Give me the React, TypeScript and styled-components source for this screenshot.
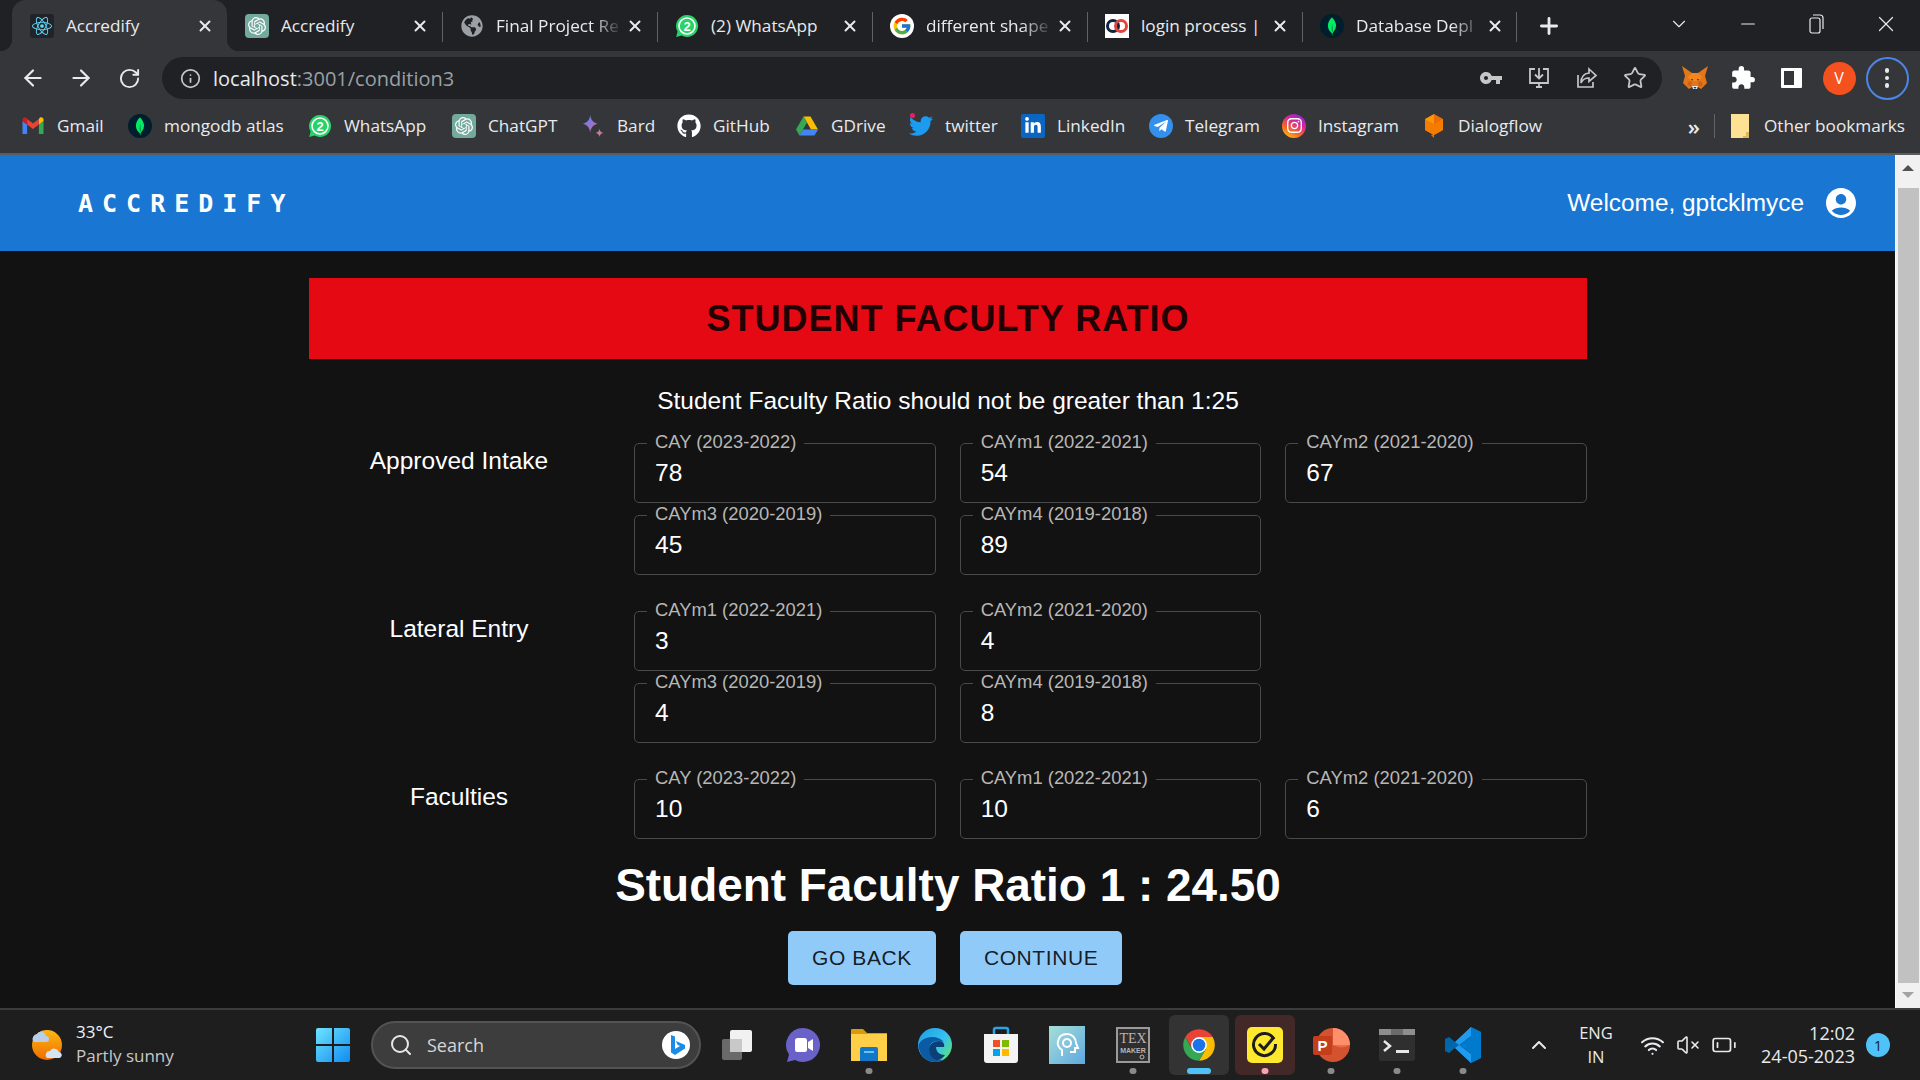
import React from 'react';

import styled, { createGlobalStyle } from 'styled-components';

import { ArrowLeft, ArrowRight, BatteryLow, ChevronDown, ChevronUp, Info, Minus, Plus, RotateCw, Search, Star, VolumeX, Wifi, X } from 'lucide-react';
import { FaGithub, FaGlobeAmericas, FaInstagram, FaLinkedinIn, FaTelegramPlane, FaTwitter } from 'react-icons/fa';
import { FcGoogle } from 'react-icons/fc';
import { MdExtension, MdVpnKey } from 'react-icons/md';
import { SiMongodb, SiOpenai, SiReact } from 'react-icons/si';

const UI_FONT = `'Open Sans', 'Noto Sans', sans-serif`;
const PAGE_FONT = `'Liberation Sans', Arial, sans-serif`;

/* ===== small drawn icons ===== */
const WhatsAppBadge: React.FC<{ size?: number }> = ({ size = 24 }) => (
  <svg width={size} height={size} viewBox="0 0 24 24">
    <path fill="#25d366" d="M12 1a11 11 0 0 0-9.4 16.6L1.2 23l5.5-1.4A11 11 0 1 0 12 1z" />
    <circle cx="12" cy="12" r="8" fill="none" stroke="#fff" strokeWidth="1.6" />
    <text x="12" y="16.5" textAnchor="middle" fontSize="13" fontWeight="700" fill="#fff" fontFamily="Liberation Sans">2</text>
  </svg>
);

const GmailIcon = () => (
  <svg width="24" height="24" viewBox="0 0 24 24">
    <path fill="#4285f4" d="M1.5 20h4.6V10.5L1.5 7z" />
    <path fill="#34a853" d="M17.9 20h4.6V7l-4.6 3.5z" />
    <path fill="#fbbc04" d="M17.9 5v5.5L22.500 7V5.500c0-1.900-2.200-3-3.700-1.800z" />
    <path fill="#ea4335" d="M6.100 10.500V5L12 9.500 17.900 5v5.500L12 15z" />
    <path fill="#c5221f" d="M1.500 5.500V7l4.600 3.500V5L5.200 3.700C3.700 2.500 1.500 3.600 1.500 5.500z" />
  </svg>
);

const BardIcon = () => (
  <svg width="30" height="30" viewBox="0 0 26 26">
    <defs>
      <linearGradient id="bard" x1="0" y1="0" x2="1" y2="1">
        <stop offset="0" stopColor="#4f86ed" />
        <stop offset="0.6" stopColor="#9b72cb" />
        <stop offset="1" stopColor="#d96570" />
      </linearGradient>
    </defs>
    <path fill="url(#bard)" d="M10 1c.8 5.500 3 8 8 9.500-5 1.500-7.200 4-8 9.500-.8-5.500-3-8-8-9.500 5-1.500 7.200-4 8-9.500z" />
    <path fill="#c77aa5" d="M20 16c.4 2.600 1.400 3.700 4 4.500-2.600.8-3.600 1.900-4 4.500-.4-2.600-1.400-3.700-4-4.500 2.600-.8 3.600-1.900 4-4.500z" />
  </svg>
);

const DriveIcon = () => (
  <svg width="24" height="24" viewBox="0 0 24 24">
    <path fill="#fbbc04" d="M8.500 2.500h7L23 15.500h-7z" />
    <path fill="#34a853" d="M8.500 2.500 1 15.500l3.500 6L12 8.500z" />
    <path fill="#4285f4" d="M4.500 21.500h15l3.500-6H8z" />
  </svg>
);

const DialogflowIcon = () => (
  <svg width="24" height="26" viewBox="0 0 24 26">
    <path fill="#ff9800" d="M12 1 3 6v11l9 5z" />
    <path fill="#ef6c00" d="m12 1 9 5v11l-9 5v3l-3-3 3-1z" />
    <path fill="#f57c00" d="M3 6l9 5 9-5v11l-9 5-9-5z" />
  </svg>
);

const FolderIcon = () => (
  <svg width="18" height="24" viewBox="0 0 18 24">
    <path fill="#fde293" d="M0 0h18v24H0z" />
    <path fill="#d9b860" d="M15 18h3v6h-6v-2h3z" />
  </svg>
);

const FoxIcon = () => (
  <svg width="28" height="26" viewBox="0 0 28 26">
    <path fill="#e2761b" d="M1 1l10 7h6l10-7-3 10 2 7-6 6-3-2h-6l-3 2-6-6 2-7z" />
    <path fill="#f6851b" d="M7 12l4-4h6l4 4-3 4H10z" />
    <path fill="#cd6116" d="M8 16l3 1-1 5-4-2zM20 16l-3 1 1 5 4-2z" />
    <path fill="#e4ebf2" d="M11 21h6l-1 3h-4z" />
    <path fill="#233447" d="M10 14h2l-1 2zM16 14h2l-1 2zM12.500 22h3L14 24z" />
  </svg>
);

const InstallIcon = () => (
  <svg width="24" height="24" viewBox="0 0 24 24" fill="none" stroke="#c4c7c5" strokeWidth="1.8">
    <path d="M8 3H3v14h18V3h-5M9 21h6M12 17v4" />
    <path d="M12 2v10M8 8.500l4 4 4-4" />
  </svg>
);

const ShareIcon = () => (
  <svg width="24" height="24" viewBox="0 0 24 24" fill="none" stroke="#c4c7c5" strokeWidth="1.7">
    <path d="M3 9v12h15v-5" />
    <path d="M14 3l7 6.500-7 6v-3.500c-4 0-6.500 1.500-8 5 0-6 3-9.500 8-10z" />
  </svg>
);

const RestoreIcon = () => (
  <svg width="18" height="22" viewBox="0 0 18 22" fill="none" stroke="#e8eaed" strokeWidth="1.200">
    <rect x="2" y="5" width="10" height="15" rx="2" />
    <path d="M5 2h7a3 3 0 0 1 3 3v11" />
  </svg>
);

const WeatherIcon = () => (
  <svg width="36" height="36" viewBox="0 0 36 36">
    <defs>
      <linearGradient id="sun" x1="0" y1="0" x2="0" y2="1">
        <stop offset="0" stopColor="#fdb813" />
        <stop offset="1" stopColor="#ef6c00" />
      </linearGradient>
    </defs>
    <circle cx="17" cy="18" r="15" fill="url(#sun)" />
    <path fill="#b9cfe8" d="M3 14a5 5 0 0 1 4-7 5 5 0 0 1 9 2 3 3 0 0 1 0 6H5a2 2 0 0 1-2-1z" />
    <path fill="#d5e2f2" d="M17 31a4 4 0 0 1 3-7 5 5 0 0 1 9 1 3 3 0 0 1 2 5 3 3 0 0 1-2 1z" />
  </svg>
);

const StartIcon = () => (
  <svg width="36" height="36" viewBox="0 0 36 36">
    <defs>
      <linearGradient id="win" x1="0" y1="0" x2="1" y2="1">
        <stop offset="0" stopColor="#6fe3ff" />
        <stop offset="1" stopColor="#0f8cf0" />
      </linearGradient>
    </defs>
    <path fill="url(#win)" d="M1 3a2 2 0 0 1 2-2h14v16H1zM19 1h14a2 2 0 0 1 2 2v14H19zM1 19h16v16H3a2 2 0 0 1-2-2zM19 19h16v14a2 2 0 0 1-2 2H19z" />
  </svg>
);

const BingIcon = () => (
  <svg width="30" height="30" viewBox="0 0 30 30">
    <circle cx="15" cy="15" r="14" fill="#fff" />
    <path fill="#1b8ce8" d="M10 5l4 1.500V19l5-3-2.500-1.200L15 11l9 4v3.500L14 25l-4-2.500z" />
  </svg>
);

const TaskViewIcon = () => (
  <svg width="34" height="34" viewBox="0 0 34 34">
    <rect x="2" y="11" width="20" height="21" rx="2" fill="#6a6a6a" />
    <rect x="10" y="2" width="22" height="22" rx="2" fill="#f1f1f1" />
    <rect x="10" y="11" width="12" height="13" fill="#c8c8c8" />
  </svg>
);

const MeetIcon = () => (
  <svg width="36" height="36" viewBox="0 0 36 36">
    <path fill="#6a62c9" d="M18 1a17 17 0 0 0-14 26.500L2 35l8-2A17 17 0 1 0 18 1z" />
    <rect x="10" y="11" width="12" height="14" rx="2.500" fill="#fff" />
    <path fill="#fff" d="m23 15 5-3v12l-5-3z" />
  </svg>
);

const ExplorerIcon = () => (
  <svg width="36" height="36" viewBox="0 0 36 36">
    <path fill="#d99a0c" d="M0 3a1 1 0 0 1 1-1h11l4 4h20v6H0z" />
    <path fill="#ffcf48" d="M0 7h36v27H0z" />
    <path fill="#1177c9" d="M9 22a2 2 0 0 1 2-2h14a2 2 0 0 1 2 2v12H9z" />
    <path fill="#6cc1f5" d="M13 24h10v2H13z" />
  </svg>
);

const EdgeIcon = () => (
  <svg width="36" height="36" viewBox="0 0 36 36">
    <defs>
      <linearGradient id="edge" x1="0" y1="0" x2="1" y2="0.800">
        <stop offset="0" stopColor="#1b9de2" />
        <stop offset="0.6" stopColor="#35c1f1" />
        <stop offset="1" stopColor="#5ee07a" />
      </linearGradient>
    </defs>
    <circle cx="18" cy="18" r="17" fill="url(#edge)" />
    <path fill="#0c59a4" d="M1.500 18C5 9 20 7 27 15c-6-3-15-1-15 7 0 6 6 11 14 11-3 1.500-5 2-8 2C9 35 2 28 1.500 18z" />
    <path fill="#0a3f78" d="M12 22c0-5 5-8 10-8 4 0 6 3 5 6h-8c0 5 4 8 9 8-2 3-5 5-8 5-5-1-8-6-8-11z" />
  </svg>
);

const StoreIcon = () => (
  <svg width="36" height="38" viewBox="0 0 36 38">
    <path fill="none" stroke="#2aa3e8" strokeWidth="2.500" d="M11 10V4a2 2 0 0 1 2-2h10a2 2 0 0 1 2 2v6" />
    <path fill="#f4f4f4" d="M1 8h34v26a3 3 0 0 1-3 3H4a3 3 0 0 1-3-3z" />
    <path fill="#f25022" d="M10 14h7v7h-7z" />
    <path fill="#7fba00" d="M19 14h7v7h-7z" />
    <path fill="#00a4ef" d="M10 23h7v7h-7z" />
    <path fill="#ffb900" d="M19 23h7v7h-7z" />
  </svg>
);

const LensIcon = () => (
  <svg width="36" height="38" viewBox="0 0 36 38">
    <defs>
      <linearGradient id="lens" x1="0" y1="0" x2="1" y2="1">
        <stop offset="0" stopColor="#a5dfd8" />
        <stop offset="1" stopColor="#5fa8e0" />
      </linearGradient>
    </defs>
    <rect width="36" height="38" fill="url(#lens)" />
    <path fill="none" stroke="#fff" strokeWidth="2" d="M13 30v-6c-3-2-5-5-4-9 1-5 5-7 9-7 5 0 9 4 9 9l2 5h-3v4h-5" />
    <circle cx="18" cy="17" r="4" fill="none" stroke="#fff" strokeWidth="2" />
  </svg>
);

const TexIcon = () => (
  <svg width="34" height="36" viewBox="0 0 34 36">
    <rect width="34" height="36" fill="#9a9a9a" />
    <rect x="2" y="2" width="30" height="32" fill="#2e2e2e" />
    <text x="17" y="16" textAnchor="middle" fontSize="14" fill="#b5b5b5" fontFamily="Liberation Serif">TEX</text>
    <text x="17" y="26" textAnchor="middle" fontSize="7" fontWeight="700" fill="#b5b5b5" fontFamily="Liberation Sans">MAKER</text>
    <circle cx="26" cy="30" r="2" fill="none" stroke="#b5b5b5" />
  </svg>
);

const ChromeIcon = () => (
  <svg width="38" height="38" viewBox="0 0 24 24">
    <path fill="#ea4335" d="M3.340 7A10 10 0 0 1 20.660 7H12a5 5 0 0 0-4.330 2.500l.33 5z" />
    <path fill="#fbbc04" d="M20.660 7A10 10 0 0 1 12 22l4.330-7.500L12 7z" />
    <path fill="#34a853" d="M12 22A10 10 0 0 1 3.340 7l4.330 7.500 8.660 0z" />
    <circle cx="12" cy="12" r="5" fill="#fff" />
    <circle cx="12" cy="12" r="4" fill="#1a73e8" />
  </svg>
);

const TodoIcon = () => (
  <svg width="36" height="36" viewBox="0 0 36 36">
    <rect width="36" height="36" rx="5" fill="#ffe92e" />
    <path fill="none" stroke="#1d1d1d" strokeWidth="3" d="M27 12a11 11 0 1 0 1.500 5" />
    <path fill="none" stroke="#1d1d1d" strokeWidth="3" d="m12 17 5 5 10-12" />
  </svg>
);

const PowerPointIcon = () => (
  <svg width="38" height="38" viewBox="0 0 38 38">
    <circle cx="21" cy="19" r="17" fill="#d35230" />
    <path fill="#ff8f6b" d="M21 2a17 17 0 0 1 17 17H21z" />
    <path fill="#ed6c47" d="M21 19h17a17 17 0 0 1-17 0z" />
    <rect x="1" y="10" width="19" height="19" rx="2" fill="#c43e1c" />
    <text x="10.500" y="25" textAnchor="middle" fontSize="15" fontWeight="700" fill="#fff" fontFamily="Liberation Sans">P</text>
  </svg>
);

const TerminalIcon = () => (
  <svg width="36" height="32" viewBox="0 0 36 32">
    <rect width="36" height="32" rx="2" fill="#2f2f2f" />
    <rect width="36" height="6" fill="#8e8e8e" />
    <rect x="12" width="12" height="6" fill="#6b6b6b" />
    <path fill="none" stroke="#e8e8e8" strokeWidth="2.500" d="m5 12 6 5-6 5" />
    <rect x="17" y="21" width="13" height="3" fill="#e8e8e8" />
  </svg>
);

const VsCodeIcon = () => (
  <svg width="36" height="38" viewBox="0 0 36 38">
    <path fill="#0065a9" d="M26 1 36 6v26l-10 5-16-15-6 5-4-2V13l4-2 6 5z" />
    <path fill="#007acc" d="M26 1 36 6v26l-10 5zM26 11 14 19l12 8z" />
    <path fill="#1f9cf0" d="M26 1v9L14 19l-4-3zM26 37v-9L14 19l-4 3z" />
  </svg>
);

const AccountIcon = () => (
  <svg width="36" height="36" viewBox="0 0 24 24" fill="#fff">
    <path d="M12 2C6.480 2 2 6.480 2 12s4.480 10 10 10 10-4.480 10-10S17.520 2 12 2zm0 4c1.930 0 3.500 1.570 3.500 3.500S13.930 13 12 13s-3.500-1.570-3.500-3.500S10.070 6 12 6zm0 14c-2.030 0-4.430-.82-6.140-2.880C7.550 15.800 9.680 15 12 15s4.450.8 6.140 2.120C16.430 19.180 14.030 20 12 20z" />
  </svg>
);

/* ===== data ===== */
const tabs = [
  { title: 'Accredify', icon: <ReactTile><SiReact size={20} color="#61dafb" /></ReactTile> },
  { title: 'Accredify', icon: <GptTile><SiOpenai size={18} color="#fff" /></GptTile> },
  { title: 'Final Project Re', fade: true, icon: <FaGlobeAmericas size={22} color="#9aa0a6" /> },
  { title: '(2) WhatsApp', icon: <WhatsAppBadge /> },
  { title: 'different shape', fade: true, icon: <GoogleTile><FcGoogle size={20} /></GoogleTile> },
  {
    title: 'login process |',
    icon: (
      <svg width="24" height="24" viewBox="0 0 24 24">
        <rect width="24" height="24" fill="#fff" />
        <circle cx="8" cy="12" r="5.500" fill="none" stroke="#10243e" strokeWidth="3" />
        <circle cx="16" cy="12" r="5.500" fill="none" stroke="#e2453c" strokeWidth="3" />
      </svg>
    ),
  },
  { title: 'Database Depl', fade: true, icon: <MongoTile><SiMongodb size={18} color="#00ed64" /></MongoTile> },
];

const bookmarks = [
  { title: 'Gmail', width: 107, icon: <GmailIcon /> },
  { title: 'mongodb atlas', width: 180, icon: <MongoTile><SiMongodb size={18} color="#00ed64" /></MongoTile> },
  { title: 'WhatsApp', width: 144, icon: <WhatsAppBadge /> },
  { title: 'ChatGPT', width: 129, icon: <GptTile><SiOpenai size={18} color="#fff" /></GptTile> },
  { title: 'Bard', width: 96, icon: <BardIcon /> },
  { title: 'GitHub', width: 118, icon: <FaGithub size={24} color="#fff" /> },
  { title: 'GDrive', width: 114, icon: <DriveIcon /> },
  { title: 'twitter', width: 112, icon: <TwitterSlot><FaTwitter size={24} color="#1d9bf0" /><TwitterDot /></TwitterSlot> },
  { title: 'LinkedIn', width: 128, icon: <LinkedInTile><FaLinkedinIn size={18} color="#fff" /></LinkedInTile> },
  { title: 'Telegram', width: 133, icon: <TelegramTile><FaTelegramPlane size={16} color="#fff" /></TelegramTile> },
  { title: 'Instagram', width: 140, icon: <InstagramTile><FaInstagram size={17} color="#fff" /></InstagramTile> },
  { title: 'Dialogflow', width: 130, icon: <DialogflowIcon /> },
];

const sections = [
  {
    label: 'Approved Intake',
    fields: [
      ['CAY (2023-2022)', '78'],
      ['CAYm1 (2022-2021)', '54'],
      ['CAYm2 (2021-2020)', '67'],
      ['CAYm3 (2020-2019)', '45'],
      ['CAYm4 (2019-2018)', '89'],
    ],
  },
  {
    label: 'Lateral Entry',
    breakAfter: 2,
    fields: [
      ['CAYm1 (2022-2021)', '3'],
      ['CAYm2 (2021-2020)', '4'],
      ['CAYm3 (2020-2019)', '4'],
      ['CAYm4 (2019-2018)', '8'],
    ],
  },
  {
    label: 'Faculties',
    fields: [
      ['CAY (2023-2022)', '10'],
      ['CAYm1 (2022-2021)', '10'],
      ['CAYm2 (2021-2020)', '6'],
    ],
  },
];

const taskApps: { icon: React.ReactNode; state?: 'open' | 'chrome' | 'todo' }[] = [
  { icon: <TaskViewIcon /> },
  { icon: <MeetIcon /> },
  { icon: <ExplorerIcon />, state: 'open' },
  { icon: <EdgeIcon /> },
  { icon: <StoreIcon /> },
  { icon: <LensIcon /> },
  { icon: <TexIcon />, state: 'open' },
  { icon: <ChromeIcon />, state: 'chrome' },
  { icon: <TodoIcon />, state: 'todo' },
  { icon: <PowerPointIcon />, state: 'open' },
  { icon: <TerminalIcon />, state: 'open' },
  { icon: <VsCodeIcon />, state: 'open' },
];

const App: React.FC = () => (
  <Root>
    <GlobalStyle />
    <TabStrip>
      {tabs.map((tab, i) => (
        <Tab key={i} $active={i === 0} $sep={i >= 2} $last={i === tabs.length - 1}>
          <Favicon>{tab.icon}</Favicon>
          <TabTitle $fade={tab.fade}>{tab.title}</TabTitle>
          <TabClose>
            <X size={18} strokeWidth={2.6} />
          </TabClose>
        </Tab>
      ))}
      <NewTab>
        <Plus size={26} strokeWidth={2.6} />
      </NewTab>
      <WindowControls>
        <WindowButton><ChevronDown size={22} strokeWidth={1.2} /></WindowButton>
        <WindowButton><Minus size={22} strokeWidth={1.2} /></WindowButton>
        <WindowButton><RestoreIcon /></WindowButton>
        <WindowButton><X size={26} strokeWidth={1.1} /></WindowButton>
      </WindowControls>
    </TabStrip>

    <Toolbar>
      <ToolButton><ArrowLeft size={26} strokeWidth={2} /></ToolButton>
      <ToolButton><ArrowRight size={26} strokeWidth={2} /></ToolButton>
      <ToolButton><RotateCw size={23} strokeWidth={2} /></ToolButton>
      <Omnibox>
        <Info size={21} color="#c4c7c5" />
        <Url>
          localhost<UrlRest>:3001/condition3</UrlRest>
        </Url>
        <OmniActions>
          <ToolButton><MdVpnKey size={24} color="#c4c7c5" /></ToolButton>
          <ToolButton><InstallIcon /></ToolButton>
          <ToolButton><ShareIcon /></ToolButton>
          <ToolButton><Star size={24} color="#c4c7c5" strokeWidth={1.8} /></ToolButton>
        </OmniActions>
      </Omnibox>
      <Extensions>
        <ToolButton><FoxIcon /></ToolButton>
        <ToolButton><MdExtension size={26} color="#fff" /></ToolButton>
        <ToolButton><SidePanelGlyph /></ToolButton>
        <ToolButton><Avatar>V</Avatar></ToolButton>
        <ToolButton>
          <MenuRing>
            <MenuDot />
            <MenuDot />
            <MenuDot />
          </MenuRing>
        </ToolButton>
      </Extensions>
    </Toolbar>

    <BookmarksBar>
      {bookmarks.map((b) => (
        <Bookmark key={b.title} $width={b.width}>
          <BookmarkIcon>{b.icon}</BookmarkIcon>
          {b.title}
        </Bookmark>
      ))}
      <BookmarksEnd>
        <Chevrons>»</Chevrons>
        <BookmarkSep />
        <OtherBookmarks>
          <FolderIcon />
          Other bookmarks
        </OtherBookmarks>
      </BookmarksEnd>
    </BookmarksBar>

    <Viewport>
      <Page>
        <AppBar>
          <Brand>ACCREDIFY</Brand>
          <UserArea>
            <Welcome>Welcome, gptcklmyce</Welcome>
            <AccountIcon />
          </UserArea>
        </AppBar>
        <Main>
          <TitleBanner>STUDENT FACULTY RATIO</TitleBanner>
          <Note>Student Faculty Ratio should not be greater than 1:25</Note>
          <Sections>
            {sections.map((section) => (
              <Section key={section.label}>
                <SectionLabel>{section.label}</SectionLabel>
                <FieldGrid>
                  {section.fields.map(([label, value], i) => (
                    <Field key={label} $newRow={section.breakAfter === i}>
                      <FieldLabel>{label}</FieldLabel>
                      <FieldValue>{value}</FieldValue>
                    </Field>
                  ))}
                </FieldGrid>
              </Section>
            ))}
          </Sections>
          <Ratio>Student Faculty Ratio 1 : 24.50</Ratio>
          <Actions>
            <ActionButton>GO BACK</ActionButton>
            <ActionButton>CONTINUE</ActionButton>
          </Actions>
        </Main>
      </Page>
      <Scrollbar>
        <ScrollArrow $dir="up" />
        <ScrollThumb />
        <ScrollArrow $dir="down" />
      </Scrollbar>
    </Viewport>

    <Taskbar>
      <WeatherWidget>
        <WeatherIcon />
        <WeatherText>
          <WeatherTemp>33°C</WeatherTemp>
          <WeatherDesc>Partly sunny</WeatherDesc>
        </WeatherText>
      </WeatherWidget>
      <StartIcon />
      <SearchPill>
        <Search size={24} color="#e8e8e8" strokeWidth={2} />
        <SearchText>Search</SearchText>
        <BingSlot><BingIcon /></BingSlot>
      </SearchPill>
      <TaskApps>
        {taskApps.map((app, i) => (
          <TaskApp key={i} $state={app.state}>
            {app.icon}
            {app.state && <TaskMark $state={app.state} />}
          </TaskApp>
        ))}
      </TaskApps>
      <TrayCaret><ChevronUp size={24} strokeWidth={2} /></TrayCaret>
      <Lang>
        <span>ENG</span>
        <span>IN</span>
      </Lang>
      <TrayIcons>
        <Wifi size={25} strokeWidth={2} />
        <VolumeX size={24} strokeWidth={1.6} />
        <BatteryLow size={26} strokeWidth={1.6} />
      </TrayIcons>
      <Clock>
        <span>12:02</span>
        <span>24-05-2023</span>
      </Clock>
      <NotifyBadge>1</NotifyBadge>
    </Taskbar>
  </Root>
);
export default App;

/* ===== styled-components ===== */
function ReactTile({ children }: { children: React.ReactNode }) {
  return <ReactTileBox>{children}</ReactTileBox>;
}
function GptTile({ children }: { children: React.ReactNode }) {
  return <GptTileBox>{children}</GptTileBox>;
}
function GoogleTile({ children }: { children: React.ReactNode }) {
  return <GoogleTileBox>{children}</GoogleTileBox>;
}
function MongoTile({ children }: { children: React.ReactNode }) {
  return <MongoTileBox>{children}</MongoTileBox>;
}
function TwitterSlot({ children }: { children: React.ReactNode }) {
  return <TwitterBox>{children}</TwitterBox>;
}
function TwitterDot() {
  return <TwitterDotBox />;
}
function LinkedInTile({ children }: { children: React.ReactNode }) {
  return <LinkedInBox>{children}</LinkedInBox>;
}
function TelegramTile({ children }: { children: React.ReactNode }) {
  return <TelegramBox>{children}</TelegramBox>;
}
function InstagramTile({ children }: { children: React.ReactNode }) {
  return <InstagramBox>{children}</InstagramBox>;
}

const GlobalStyle = createGlobalStyle`
  html, body {
    margin: 0;
    height: 100%;
    overflow: hidden;
    background: #121212;
  }
  * {
    box-sizing: border-box;
  }
`;

const Root = styled.div`
  height: 100vh;
  width: 100vw;
  display: flex;
  flex-direction: column;
  font-family: ${UI_FONT};
  color: #e8eaed;
`;

const TabStrip = styled.div`
  height: 51px;
  flex: none;
  display: flex;
  padding-left: 12px;
  background: #202124;
`;

const Tab = styled.div<{ $active?: boolean; $sep?: boolean; $last?: boolean }>`
  position: relative;
  width: 215px;
  flex: none;
  display: flex;
  align-items: center;
  padding: 0 10px 0 18px;
  font-size: 17.2px;
  background: ${(p) => (p.$active ? '#35363a' : 'transparent')};
  border-radius: ${(p) => (p.$active ? '14px 14px 0 0' : '0')};

  &::before {
    content: '';
    display: ${(p) => (p.$sep || p.$active ? 'block' : 'none')};
    position: absolute;
    left: ${(p) => (p.$active ? '-12px' : '0')};
    top: ${(p) => (p.$active ? '39px' : '12px')};
    height: ${(p) => (p.$active ? '12px' : '30px')};
    width: ${(p) => (p.$active ? '12px' : '1px')};
    background: ${(p) =>
      p.$active ? 'radial-gradient(circle at 0 0, transparent 12px, #35363a 12.5px)' : '#5f6368'};
  }

  &::after {
    content: '';
    display: ${(p) => (p.$last || p.$active ? 'block' : 'none')};
    position: absolute;
    right: ${(p) => (p.$active ? '-12px' : '0')};
    top: ${(p) => (p.$active ? '39px' : '12px')};
    height: ${(p) => (p.$active ? '12px' : '30px')};
    width: ${(p) => (p.$active ? '12px' : '1px')};
    background: ${(p) =>
      p.$active ? 'radial-gradient(circle at 100% 0, transparent 12px, #35363a 12.5px)' : '#5f6368'};
  }
`;

const Favicon = styled.span`
  width: 24px;
  height: 24px;
  flex: none;
  display: flex;
  align-items: center;
  justify-content: center;
  margin-right: 12px;
`;

const TabTitle = styled.span<{ $fade?: boolean }>`
  flex: 1;
  min-width: 0;
  white-space: nowrap;
  overflow: hidden;
  ${(p) => p.$fade && 'mask-image: linear-gradient(90deg, #000 75%, transparent 100%);'}
`;

const TabClose = styled.span`
  width: 24px;
  flex: none;
  display: flex;
  justify-content: center;
`;

const NewTab = styled.span`
  width: 64px;
  display: flex;
  align-items: center;
  justify-content: center;
`;

const WindowControls = styled.div`
  margin-left: auto;
  display: flex;
`;

const WindowButton = styled.span`
  width: 69px;
  display: flex;
  align-items: center;
  justify-content: center;
  padding-bottom: 4px;
`;

const Toolbar = styled.div`
  height: 54px;
  flex: none;
  display: flex;
  align-items: center;
  padding-left: 9px;
  background: #35363a;
`;

const ToolButton = styled.span`
  width: 48px;
  height: 42px;
  flex: none;
  display: flex;
  align-items: center;
  justify-content: center;
`;

const Omnibox = styled.div`
  width: 1500px;
  height: 42px;
  margin-left: 9px;
  padding: 0 3px 0 18px;
  flex: none;
  display: flex;
  align-items: center;
  border-radius: 21px;
  background: #202124;
`;

const Url = styled.span`
  margin-left: 12px;
  font-size: 20px;
  color: #e8eaed;
`;

const UrlRest = styled.span`
  color: #9aa0a6;
`;

const OmniActions = styled.div`
  margin-left: auto;
  display: flex;
`;

const Extensions = styled.div`
  margin-left: 9px;
  display: flex;
`;

const SidePanelGlyph = styled.span`
  width: 21px;
  height: 20px;
  border: 3px solid #fff;
  border-right-width: 8px;
  border-radius: 1px;
`;

const Avatar = styled.span`
  width: 33px;
  height: 33px;
  border-radius: 50%;
  display: flex;
  align-items: center;
  justify-content: center;
  background: #f4511e;
  color: #fff;
  font-size: 16px;
`;

const MenuRing = styled.span`
  width: 43px;
  height: 43px;
  border-radius: 50%;
  border: 2.5px solid #4a86e8;
  display: flex;
  flex-direction: column;
  align-items: center;
  justify-content: center;
  gap: 3px;
`;

const MenuDot = styled.i`
  width: 4.5px;
  height: 4.5px;
  border-radius: 50%;
  background: #e8eaed;
`;

const BookmarksBar = styled.div`
  height: 50px;
  flex: none;
  display: flex;
  align-items: center;
  padding: 0 15px 7px 21px;
  background: #35363a;
  border-bottom: 2px solid #5b5b5b;
`;

const Bookmark = styled.div<{ $width: number }>`
  width: ${(p) => p.$width}px;
  flex: none;
  display: flex;
  align-items: center;
  gap: 12px;
  font-size: 17.2px;
  white-space: nowrap;
`;

const BookmarkIcon = styled.span`
  width: 24px;
  height: 24px;
  flex: none;
  display: flex;
  align-items: center;
  justify-content: center;
`;

const BookmarksEnd = styled.div`
  margin-left: auto;
  display: flex;
  align-items: center;
`;

const Chevrons = styled.span`
  font-size: 22px;
  line-height: 24px;
  font-weight: 600;
`;

const BookmarkSep = styled.span`
  width: 1px;
  height: 24px;
  margin: 0 16px 0 14px;
  background: #5f6368;
`;

const OtherBookmarks = styled.span`
  display: flex;
  align-items: center;
  gap: 15px;
  font-size: 17.2px;
`;

const IconTile = styled.span`
  width: 24px;
  height: 24px;
  display: flex;
  align-items: center;
  justify-content: center;
`;

const ReactTileBox = styled(IconTile)`
  background: #20232a;
  border-radius: 3px;
`;

const GptTileBox = styled(IconTile)`
  background: #74aa9c;
  border-radius: 4px;
`;

const GoogleTileBox = styled(IconTile)`
  background: #fff;
  border-radius: 50%;
`;

const MongoTileBox = styled(IconTile)`
  background: #001e2b;
  border-radius: 50%;
`;

const TwitterBox = styled(IconTile)`
  position: relative;
`;

const TwitterDotBox = styled.span`
  position: absolute;
  left: 1px;
  top: -1px;
  width: 5px;
  height: 5px;
  border-radius: 50%;
  background: #e91e63;
`;

const LinkedInBox = styled(IconTile)`
  background: #0a66c2;
  border-radius: 2px;
`;

const TelegramBox = styled(IconTile)`
  background: #3390ec;
  border-radius: 50%;
`;

const InstagramBox = styled(IconTile)`
  border-radius: 50%;
  background: linear-gradient(30deg, #fdc70c 5%, #f3672c 35%, #d6249f 65%, #7a2fd0 95%);
`;

const Viewport = styled.div`
  flex: 1;
  min-height: 0;
  display: flex;
`;

const Page = styled.div`
  flex: 1;
  min-width: 0;
  display: flex;
  flex-direction: column;
  background: #121212;
  color: #fff;
  font-family: ${PAGE_FONT};
`;

const AppBar = styled.header`
  height: 96px;
  flex: none;
  display: flex;
  align-items: center;
  justify-content: space-between;
  padding: 0 36px 0 78px;
  background: #1976d2;
`;

const Brand = styled.div`
  font-family: 'DejaVu Sans Mono', monospace;
  font-weight: 700;
  font-size: 25px;
  letter-spacing: 9px;
`;

const UserArea = styled.div`
  display: flex;
  align-items: center;
  gap: 19px;
`;

const Welcome = styled.span`
  font-size: 24.4px;
`;

const Main = styled.main`
  flex: 1;
  padding: 27px 308px 0 309px;
`;

const TitleBanner = styled.h1`
  margin: 0 0 28px;
  height: 81px;
  display: flex;
  align-items: center;
  justify-content: center;
  background: #e50914;
  color: #200204;
  font-size: 36px;
  font-weight: 700;
  letter-spacing: 1px;
`;

const Note = styled.div`
  margin-bottom: 28px;
  text-align: center;
  font-size: 24.5px;
  line-height: 28px;
`;

const Sections = styled.div`
  display: flex;
  flex-direction: column;
  gap: 36px;
`;

const Section = styled.section`
  display: grid;
  grid-template-columns: 300px 1fr;
  column-gap: 25px;
  align-items: start;
`;

const SectionLabel = styled.div`
  text-align: center;
  font-size: 24.5px;
  line-height: 36px;
`;

const FieldGrid = styled.div`
  display: grid;
  grid-template-columns: repeat(3, 1fr);
  gap: 12px 24px;
`;

const Field = styled.div<{ $newRow?: boolean }>`
  position: relative;
  height: 60px;
  padding: 0 20px;
  display: flex;
  align-items: center;
  border: 1px solid #4a4a4a;
  border-radius: 5px;
  ${(p) => p.$newRow && 'grid-column: 1;'}
`;

const FieldLabel = styled.span`
  position: absolute;
  left: 12px;
  top: -13px;
  padding: 0 8px;
  background: #121212;
  color: #b7b7b7;
  font-size: 18.4px;
  line-height: 21px;
  white-space: nowrap;
`;

const FieldValue = styled.span`
  font-size: 24.5px;
`;

const Ratio = styled.h2`
  margin: 20px 0 20px;
  text-align: center;
  font-size: 45.9px;
  font-weight: 700;
  line-height: 52px;
`;

const Actions = styled.div`
  display: flex;
  gap: 24px;
  padding-left: 479px;
`;

const ActionButton = styled.button`
  height: 54px;
  padding: 0 24px;
  border: 0;
  border-radius: 5px;
  background: #90caf9;
  color: rgba(0, 0, 0, 0.87);
  font-family: ${PAGE_FONT};
  font-size: 21px;
  letter-spacing: 0.6px;
`;

const Scrollbar = styled.div`
  width: 25px;
  flex: none;
  display: flex;
  flex-direction: column;
  align-items: center;
  background: #f1f1f1;
  border-left: 1px solid #fafafa;
`;

const ScrollArrow = styled.span<{ $dir: 'up' | 'down' }>`
  flex: none;
  width: 0;
  height: 0;
  border-left: 6px solid transparent;
  border-right: 6px solid transparent;
  ${(p) =>
    p.$dir === 'up'
      ? 'border-bottom: 6px solid #505050; margin-top: 10px; margin-bottom: 17px;'
      : 'border-top: 6px solid #a3a3a3; margin-top: 9px; margin-bottom: 10px;'}
`;

const ScrollThumb = styled.div`
  width: 21px;
  flex: 1;
  background: #c1c1c1;
`;

const Taskbar = styled.footer`
  height: 72px;
  flex: none;
  display: flex;
  align-items: center;
  background: #1e1e1e;
  border-top: 2px solid #3c3c3c;
  font-size: 17px;
`;

const WeatherWidget = styled.div`
  width: 315px;
  flex: none;
  display: flex;
  align-items: center;
  gap: 10px;
  padding-left: 30px;
`;

const WeatherText = styled.div`
  display: flex;
  flex-direction: column;
  line-height: 24px;
  margin-top: -2px;
`;

const WeatherTemp = styled.span`
  color: #f2f2f2;
`;

const WeatherDesc = styled.span`
  color: #c8c8c8;
`;

const SearchPill = styled.div`
  width: 330px;
  height: 48px;
  margin-left: 20px;
  padding: 0 8px 0 16px;
  flex: none;
  display: flex;
  align-items: center;
  border-radius: 24px;
  background: #3d3d3d;
  border: 2px solid #535353;
`;

const SearchText = styled.span`
  margin-left: 14px;
  font-size: 18px;
  color: #d6d6d6;
`;

const BingSlot = styled.span`
  margin-left: auto;
  display: flex;
`;

const TaskApps = styled.div`
  margin-left: 3px;
  display: flex;
`;

const TaskApp = styled.div<{ $state?: 'open' | 'chrome' | 'todo' }>`
  position: relative;
  width: 66px;
  height: 60px;
  flex: none;
  display: flex;
  align-items: center;
  justify-content: center;
  &::before {
    content: '';
    display: ${(p) => (p.$state === 'chrome' || p.$state === 'todo' ? 'block' : 'none')};
    position: absolute;
    inset: 0 3px;
    border-radius: 6px;
    background: ${(p) => (p.$state === 'todo' ? '#432828' : '#333')};
    z-index: 0;
  }
  > svg {
    position: relative;
    z-index: 1;
  }
`;

const TaskMark = styled.span<{ $state: 'open' | 'chrome' | 'todo' }>`
  position: absolute;
  z-index: 1;
  bottom: 1px;
  left: 50%;
  transform: translateX(-50%);
  height: 6px;
  border-radius: 3px;
  width: ${(p) => (p.$state === 'chrome' ? 24 : 7)}px;
  background: ${(p) => (p.$state === 'chrome' ? '#4fc3f7' : p.$state === 'todo' ? '#f5a3b0' : '#8a8a8a')};
`;

const TrayCaret = styled.span`
  width: 86px;
  flex: none;
  display: flex;
  justify-content: center;
`;

const Lang = styled.div`
  width: 28px;
  flex: none;
  display: flex;
  flex-direction: column;
  align-items: center;
  font-size: 16.5px;
  line-height: 24px;
`;

const TrayIcons = styled.div`
  margin-left: 30px;
  display: flex;
  align-items: center;
  gap: 11px;
`;

const Clock = styled.div`
  width: 118px;
  flex: none;
  display: flex;
  flex-direction: column;
  align-items: flex-end;
  font-size: 18px;
  line-height: 23px;
`;

const NotifyBadge = styled.span`
  width: 24px;
  height: 24px;
  margin-left: 11px;
  border-radius: 50%;
  display: flex;
  align-items: center;
  justify-content: center;
  background: #4fc3f7;
  color: #10222c;
  font-size: 14px;
`;
